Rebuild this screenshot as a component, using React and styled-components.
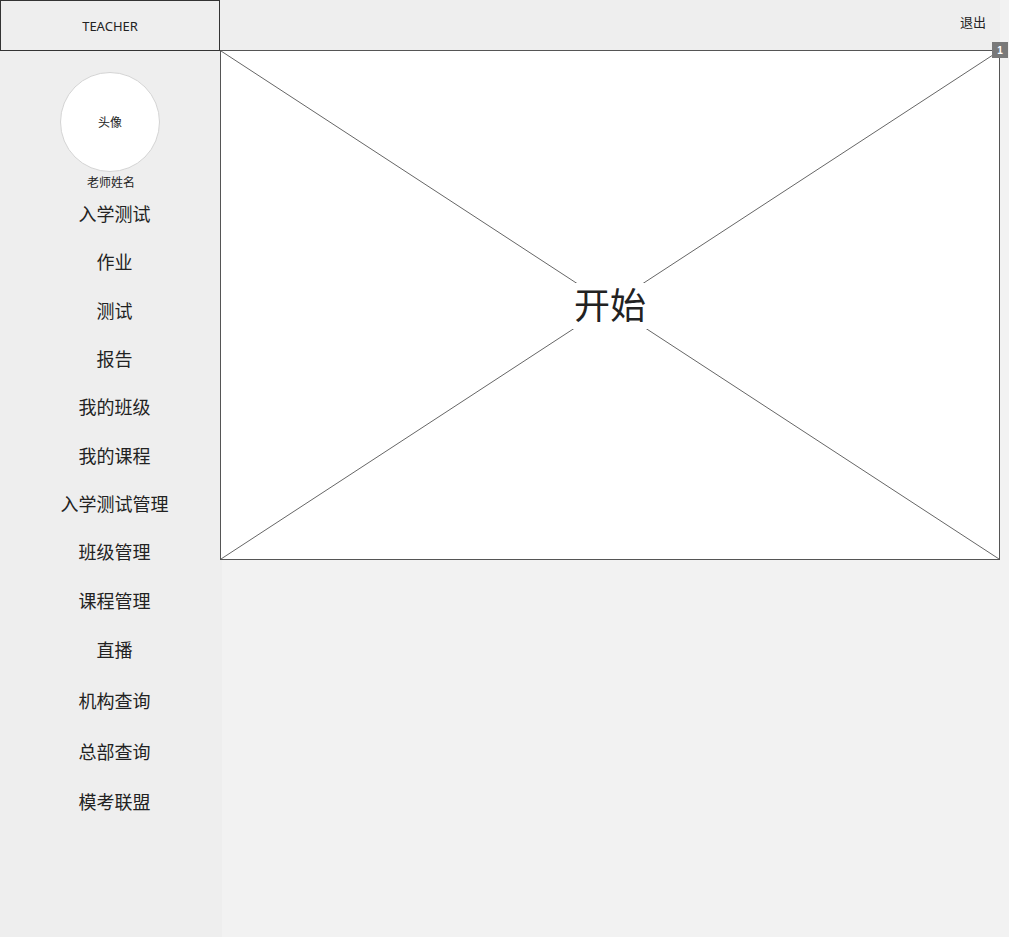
import React from "react";
import styled, { createGlobalStyle } from "styled-components";

const GlobalStyle = createGlobalStyle`
  html, body {
    margin: 0;
    padding: 0;
    background: #f2f2f2;
    font-family: "Noto Sans", "Noto Sans CJK SC", sans-serif;
    color: #333;
  }
`;

const Page = styled.div`
  display: flex;
  width: 1009px;
  height: 937px;
  background: #f2f2f2;
  overflow: hidden;
`;

// 왼쪽 메뉴 영역
const Sidebar = styled.aside`
  display: flex;
  flex-direction: column;
  align-items: center;
  width: 222px;
  flex-shrink: 0;
  background: #eeeeee;
`;

const Brand = styled.div`
  box-sizing: border-box;
  align-self: flex-start;
  display: flex;
  justify-content: center;
  align-items: center;
  width: 220px;
  height: 51px;
  border: 1px solid #333;
  font-size: 13px;
  color: #222;
`;

const Avatar = styled.div`
  box-sizing: border-box;
  display: flex;
  justify-content: center;
  align-items: center;
  width: 100px;
  height: 100px;
  margin-top: 21px;
  margin-right: 2px;
  border-radius: 50%;
  background: #fff;
  border: 1px solid #d4d4d4;
  font-size: 12px;
  color: #222;
`;

const TeacherName = styled.div`
  margin-top: 3px;
  font-size: 12px;
  line-height: 16px;
  color: #222;
`;

const MenuList = styled.nav`
  display: flex;
  flex-direction: column;
  align-items: center;
  width: 100%;
  margin-top: -2px;
  padding-left: 7px;
  box-sizing: border-box;
`;

// 아래쪽 메뉴는 간격이 조금 더 넓음
const MenuItem = styled.div`
  display: flex;
  justify-content: center;
  align-items: center;
  height: ${(props) => (props.$tall ? "50.8px" : "48.3px")};
  font-size: 18px;
  color: #222;
`;

const Main = styled.main`
  display: flex;
  flex-direction: column;
  width: 780px;
  margin-left: -2px;
`;

const TopBar = styled.header`
  box-sizing: border-box;
  display: flex;
  justify-content: flex-end;
  align-items: center;
  height: 50px;
  padding: 0 14px 8px 0;
  background: #eeeeee;
  font-size: 13px;
  color: #222;
`;

// 이미지 자리 표시
const Placeholder = styled.div`
  position: relative;
  box-sizing: border-box;
  display: flex;
  justify-content: center;
  align-items: center;
  height: 510px;
  background: #fff;
  border: 1px solid #555;
`;

const Cross = styled.svg`
  position: absolute;
  inset: 0;
  width: 100%;
  height: 100%;
`;

const StartLabel = styled.div`
  position: relative;
  padding: 0 2px;
  margin-top: 2px;
  line-height: 46px;
  background: #fff;
  font-size: 36px;
  color: #222;
`;

const Badge = styled.div`
  position: absolute;
  top: -9px;
  right: -9px;
  display: flex;
  justify-content: center;
  align-items: center;
  width: 16px;
  height: 16px;
  background: #797979;
  color: #fff;
  font-size: 10px;
  font-weight: bold;
  font-family: "Liberation Sans", sans-serif;
`;

const menus = [
  "入学测试",
  "作业",
  "测试",
  "报告",
  "我的班级",
  "我的课程",
  "入学测试管理",
  "班级管理",
  "课程管理",
  "直播",
  "机构查询",
  "总部查询",
  "模考联盟",
];

const App = () => {
  return (
    <>
      <GlobalStyle />
      <Page>
        <Sidebar>
          <Brand>TEACHER</Brand>
          <Avatar>头像</Avatar>
          <TeacherName>老师姓名</TeacherName>
          <MenuList>
            {menus.map((name, i) => (
              <MenuItem key={name} $tall={i >= 9}>
                {name}
              </MenuItem>
            ))}
          </MenuList>
        </Sidebar>
        <Main>
          <TopBar>退出</TopBar>
          <Placeholder>
            <Cross viewBox="0 0 100 100" preserveAspectRatio="none">
              <line x1="0" y1="0" x2="100" y2="100" stroke="#666" strokeWidth="1" vectorEffect="non-scaling-stroke" />
              <line x1="100" y1="0" x2="0" y2="100" stroke="#666" strokeWidth="1" vectorEffect="non-scaling-stroke" />
            </Cross>
            <StartLabel>开始</StartLabel>
            <Badge>1</Badge>
          </Placeholder>
        </Main>
      </Page>
    </>
  );
};

export default App;
